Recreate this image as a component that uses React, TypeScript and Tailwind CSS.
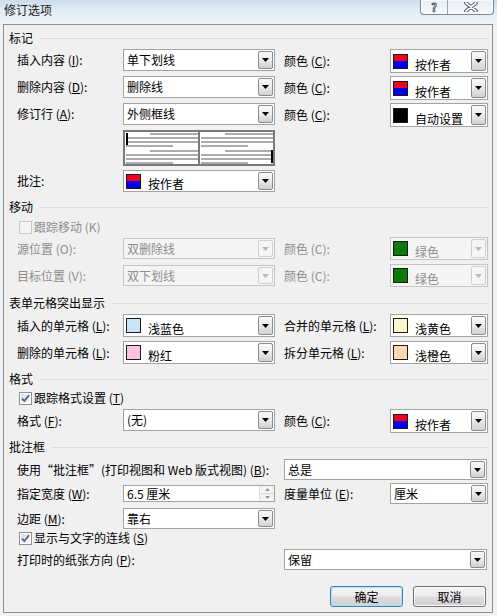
import React from 'react';

type SW = 'author' | 'black' | 'green' | 'lblue' | 'pink' | 'lyellow' | 'lorange';

function Swatch({ kind }: { kind: SW }) {
  if (kind === 'author') {
    return (
      <div className="w-[15px] h-[15px] shrink-0 self-center ml-[2px] border border-[#1a1a1a] flex flex-col">
        <div className="flex-1 bg-[#f2001f]" />
        <div className="flex-1 bg-[#0000ee]" />
      </div>
    );
  }
  const map: Record<string, string> = {
    black: 'bg-black',
    green: 'bg-[#0b7a0b]',
    lblue: 'bg-[#c9e2f8]',
    pink: 'bg-[#ffc3dd]',
    lyellow: 'bg-[#fbf9cc]',
    lorange: 'bg-[#fdd8b5]',
  };
  return <div className={`w-[15px] h-[15px] shrink-0 self-center ml-[2px] border border-[#1a1a1a] ${map[kind]}`} />;
}

function ArrowBtn({ disabled }: { disabled?: boolean }) {
  return (
    <div
      className={`w-[15px] shrink-0 m-px rounded-[2px] border flex items-center justify-center ${
        disabled ? 'border-[#d0d0d0] bg-[#f5f5f5]' : 'border-[#8b8b8b] bg-linear-to-b from-[#fafafa] via-[#ebebeb] to-[#d0d0d0]'
      }`}
    >
      <svg width="7" height="4" viewBox="0 0 7 4">
        <path d="M0 0H7L3.5 4Z" fill={disabled ? '#b8b8b8' : '#000'} />
      </svg>
    </div>
  );
}

function Combo({
  text,
  cls,
  disabled,
  swatch,
}: {
  text: string;
  cls: string;
  disabled?: boolean;
  swatch?: SW;
}) {
  return (
    <div
      className={`flex shrink-0 border ${
        disabled ? 'border-[#c4c4c4] bg-[#f4f4f4] text-[#8d8d8d]' : 'border-[#a3a3a3] bg-white text-black'
      } ${cls}`}
    >
      {swatch ? (
        <div className="flex-1 flex min-w-0">
          <Swatch kind={swatch} />
          <span className="self-end ml-[7px] leading-[14px] whitespace-nowrap">{text}</span>
        </div>
      ) : (
        <div className="flex-1 flex items-center pl-[3px] whitespace-nowrap">{text}</div>
      )}
      <ArrowBtn disabled={disabled} />
    </div>
  );
}

function Spin({ text, cls }: { text: string; cls: string }) {
  return (
    <div className={`flex shrink-0 border border-[#a3a3a3] bg-white ${cls}`}>
      <div className="flex-1 flex items-center pl-[3px] whitespace-nowrap">{text}</div>
      <div className="w-[15px] shrink-0 flex flex-col border-l border-[#dcdcdc] bg-[#f3f3f3]">
        <div className="flex-1 flex items-center justify-center border-b border-[#dadada]">
          <svg width="5" height="3" viewBox="0 0 5 3">
            <path d="M0 3H5L2.5 0Z" fill="#8a9bb0" />
          </svg>
        </div>
        <div className="flex-1 flex items-center justify-center">
          <svg width="5" height="3" viewBox="0 0 5 3">
            <path d="M0 0H5L2.5 3Z" fill="#8a9bb0" />
          </svg>
        </div>
      </div>
    </div>
  );
}

function Check({ checked, disabled }: { checked?: boolean; disabled?: boolean }) {
  return (
    <div
      className={`w-[13px] h-[13px] shrink-0 border flex items-center justify-center ${
        disabled ? 'border-[#c6c6c6] bg-[#f6f6f6]' : 'border-[#8e8f8f] bg-white'
      }`}
    >
      <div
        className={`w-[9px] h-[9px] flex items-center justify-center ${
          disabled ? 'bg-[#f3f3f3]' : 'bg-linear-to-br from-[#d9dcdf] to-[#f7f7f7]'
        }`}
      >
        {checked && (
          <svg width="9" height="9" viewBox="0 0 9 9">
            <path d="M1 4.6 L3.4 7 L8 1.2" stroke="#4c5f8f" strokeWidth="1.8" fill="none" />
          </svg>
        )}
      </div>
    </div>
  );
}

function Header({ text, cls }: { text: string; cls: string }) {
  return (
    <div className={`flex items-center h-[16px] pl-[5px] pr-[3px] ${cls}`}>
      <span className="whitespace-nowrap">{text}</span>
      <div className="flex-1 h-px bg-[#d9dde1] ml-[7px]" />
    </div>
  );
}

function Lbl({ children, cls = 'h-[22px]', dis }: { children: React.ReactNode; cls?: string; dis?: boolean }) {
  return (
    <div className={`w-[106px] shrink-0 flex items-center whitespace-nowrap ${dis ? 'text-[#8d8d8d]' : ''} ${cls}`}>
      {children}
    </div>
  );
}

function Preview() {
  const lines = (x0: number) => {
    const full = [x0, 72];
    const ind = [x0 + 24, 48];
    const sh = [x0, 47];
    const rows: [number, number[]][] = [
      [3, ind],
      [7, full],
      [11, full],
      [15, sh],
      [20, ind],
      [24, full],
      [28, full],
      [32, sh],
    ];
    return rows.map(([y, [x, w]], i) => <rect key={x0 + '-' + i} x={x} y={y} width={w} height={2} fill="#ababab" />);
  };
  return (
    <svg width="152" height="36" viewBox="0 0 152 36" className="shrink-0">
      <rect x="0" y="0" width="152" height="36" fill="#fff" />
      {lines(3)}
      {lines(78)}
      <rect x="3" y="3" width="2" height="12" fill="#000" />
      <rect x="148" y="20" width="2" height="13" fill="#000" />
      <rect x="1" y="1" width="150" height="34" fill="none" stroke="#7a7a7a" strokeWidth="2" />
      <rect x="75" y="0" width="2" height="36" fill="#7a7a7a" />
    </svg>
  );
}

function Btn({ text, def }: { text: string; def?: boolean }) {
  return (
    <div
      className={`w-[73px] h-[21px] rounded-[3px] border flex items-center justify-center bg-[linear-gradient(#f4f4f4,#ebebeb_48%,#dddddd_52%,#cfcfcf)] ${
        def ? 'border-[#3c7fb1] shadow-[inset_0_0_0_1px_#b5e2f9]' : 'border-[#707070] shadow-[inset_0_0_0_1px_#fcfcfc]'
      }`}
    >
      {text}
    </div>
  );
}

export default function App() {
  return (
    <div className="w-[497px] h-[616px] flex flex-col overflow-hidden font-['Noto_Sans_CJK_SC','Noto_Sans',sans-serif] text-[12px] leading-[14px] text-black bg-[linear-gradient(180deg,#cadcee_0px,#e2ecf5_10px,#edf2f8_24px,#f0f3f6_100%)]">
      {/* title bar */}
      <div className="h-[24px] shrink-0 flex items-start justify-between pl-[4px] pr-[3px]">
        <div className="mt-[3px] text-[#1b1b1b] leading-[14px]">修订选项</div>
        <div className="flex h-[15px] border border-t-0 border-[#7b8794] rounded-b-[4px] bg-[linear-gradient(#e8eef4,#f6f8fb)] shadow-[inset_0_0_0_1px_rgba(255,255,255,0.7)]">
          <div className="w-[27px] h-[14px] flex items-center justify-center border-r border-[#9aa4ae] text-white font-bold text-[11px] leading-[12px] [-webkit-text-stroke:0.8px_#4a5563]">
            ?
          </div>
          <div className="w-[45px] flex items-center justify-center">
            <svg width="14" height="10" viewBox="0 0 14 10">
              <path d="M2 1 L12 9 M12 1 L2 9" stroke="#4a5563" strokeWidth="3.6" strokeLinecap="round" />
              <path d="M2 1 L12 9 M12 1 L2 9" stroke="#ffffff" strokeWidth="1.8" strokeLinecap="round" />
            </svg>
          </div>
        </div>
      </div>

      {/* panel */}
      <div className="ml-[3px] w-[490px] h-[589px] shrink-0 border border-[#8e8e8e] bg-[#f0f0f0] flex flex-col">
        <Header text="标记" cls="mt-[5px]" />

        <div className="flex items-start pl-[13px] mt-[3px] h-[24px]">
          <Lbl>插入内容 (<u>I</u>):</Lbl>
          <Combo text="单下划线" cls="w-[152px] h-[22px]" />
          <div className="w-[9px] shrink-0" />
          <Lbl cls="h-[24px]">颜色 (<u>C</u>):</Lbl>
          <Combo text="按作者" swatch="author" cls="w-[98px] h-[24px]" />
        </div>
        <div className="flex items-start pl-[13px] mt-[3px] h-[24px]">
          <Lbl>删除内容 (<u>D</u>):</Lbl>
          <Combo text="删除线" cls="w-[152px] h-[22px]" />
          <div className="w-[9px] shrink-0" />
          <Lbl cls="h-[24px]">颜色 (<u>C</u>):</Lbl>
          <Combo text="按作者" swatch="author" cls="w-[98px] h-[24px]" />
        </div>
        <div className="flex items-start pl-[13px] mt-[3px] h-[24px]">
          <Lbl>修订行 (<u>A</u>):</Lbl>
          <Combo text="外侧框线" cls="w-[152px] h-[22px]" />
          <div className="w-[9px] shrink-0" />
          <Lbl cls="h-[24px]">颜色 (<u>C</u>):</Lbl>
          <Combo text="自动设置" swatch="black" cls="w-[98px] h-[24px]" />
        </div>
        <div className="flex items-start pl-[119px] mt-[3px] h-[36px]">
          <Preview />
        </div>
        <div className="flex items-start pl-[13px] mt-[4px] h-[22px]">
          <Lbl>批注:</Lbl>
          <Combo text="按作者" swatch="author" cls="w-[152px] h-[22px]" />
        </div>

        <Header text="移动" cls="mt-[7px]" />
        <div className="flex items-center pl-[15px] mt-[4px] h-[16px] text-[#8d8d8d]">
          <Check disabled />
          <span className="ml-[2px]">跟踪移动 (K)</span>
        </div>
        <div className="flex items-start pl-[13px] mt-[2px] h-[24px]">
          <Lbl dis cls="h-[23px]">源位置 (O):</Lbl>
          <div className="pt-[1px]">
            <Combo text="双删除线" disabled cls="w-[152px] h-[21px]" />
          </div>
          <div className="w-[9px] shrink-0" />
          <Lbl dis cls="h-[23px]">颜色 (C):</Lbl>
          <Combo text="绿色" swatch="green" disabled cls="w-[98px] h-[23px]" />
        </div>
        <div className="flex items-start pl-[13px] mt-[3px] h-[24px]">
          <Lbl dis cls="h-[23px]">目标位置 (V):</Lbl>
          <div className="pt-[1px]">
            <Combo text="双下划线" disabled cls="w-[152px] h-[21px]" />
          </div>
          <div className="w-[9px] shrink-0" />
          <Lbl dis cls="h-[23px]">颜色 (C):</Lbl>
          <Combo text="绿色" swatch="green" disabled cls="w-[98px] h-[23px]" />
        </div>

        <Header text="表单元格突出显示" cls="mt-[7px]" />
        <div className="flex items-start pl-[13px] mt-[3px] h-[23px]">
          <Lbl cls="h-[23px]">插入的单元格 (<u>L</u>):</Lbl>
          <Combo text="浅蓝色" swatch="lblue" cls="w-[152px] h-[23px]" />
          <div className="w-[9px] shrink-0" />
          <Lbl cls="h-[23px]">合并的单元格 (<u>L</u>):</Lbl>
          <Combo text="浅黄色" swatch="lyellow" cls="w-[98px] h-[23px]" />
        </div>
        <div className="flex items-start pl-[13px] mt-[4px] h-[23px]">
          <Lbl cls="h-[23px]">删除的单元格 (<u>L</u>):</Lbl>
          <Combo text="粉红" swatch="pink" cls="w-[152px] h-[23px]" />
          <div className="w-[9px] shrink-0" />
          <Lbl cls="h-[23px]">拆分单元格 (<u>L</u>):</Lbl>
          <Combo text="浅橙色" swatch="lorange" cls="w-[98px] h-[23px]" />
        </div>

        <Header text="格式" cls="mt-[7px]" />
        <div className="flex items-center pl-[15px] mt-[3px] h-[16px]">
          <Check checked />
          <span className="ml-[2px]">
            跟踪格式设置 (<u>T</u>)
          </span>
        </div>
        <div className="flex items-start pl-[13px] mt-[3px] h-[24px]">
          <Lbl cls="h-[23px]">格式 (<u>F</u>):</Lbl>
          <Combo text="(无)" cls="w-[152px] h-[22px]" />
          <div className="w-[9px] shrink-0" />
          <Lbl cls="h-[24px]">颜色 (<u>C</u>):</Lbl>
          <Combo text="按作者" swatch="author" cls="w-[98px] h-[24px]" />
        </div>

        <Header text="批注框" cls="mt-[6px]" />
        <div className="flex items-start pl-[13px] mt-[4px] h-[21px]">
          <div className="w-[267px] shrink-0 h-[21px] flex items-center whitespace-nowrap">
            使用“批注框”(打印视图和 Web 版式视图) (<u>B</u>):
          </div>
          <Combo text="总是" cls="w-[203px] h-[21px]" />
        </div>
        <div className="flex items-start pl-[13px] mt-[3px] h-[21px]">
          <Lbl cls="h-[21px]">指定宽度 (<u>W</u>):</Lbl>
          <div className="pt-[2px]">
            <Spin text="6.5 厘米" cls="w-[152px] h-[17px]" />
          </div>
          <div className="w-[9px] shrink-0" />
          <Lbl cls="h-[21px]">度量单位 (<u>E</u>):</Lbl>
          <Combo text="厘米" cls="w-[98px] h-[21px]" />
        </div>
        <div className="flex items-start pl-[13px] mt-[4px] h-[21px]">
          <Lbl cls="h-[21px]">边距 (<u>M</u>):</Lbl>
          <Combo text="靠右" cls="w-[152px] h-[21px]" />
        </div>
        <div className="flex items-center pl-[15px] mt-[1px] h-[16px]">
          <Check checked />
          <span className="ml-[2px]">
            显示与文字的连线 (<u>S</u>)
          </span>
        </div>
        <div className="flex items-start pl-[13px] mt-[3px] h-[21px]">
          <div className="w-[267px] shrink-0 h-[21px] flex items-center whitespace-nowrap">
            打印时的纸张方向 (<u>P</u>):
          </div>
          <Combo text="保留" cls="w-[203px] h-[21px]" />
        </div>

        <div className="flex justify-end gap-[10px] pr-[6px] mt-[16px] h-[21px]">
          <Btn text="确定" def />
          <Btn text="取消" />
        </div>
      </div>
    </div>
  );
}
